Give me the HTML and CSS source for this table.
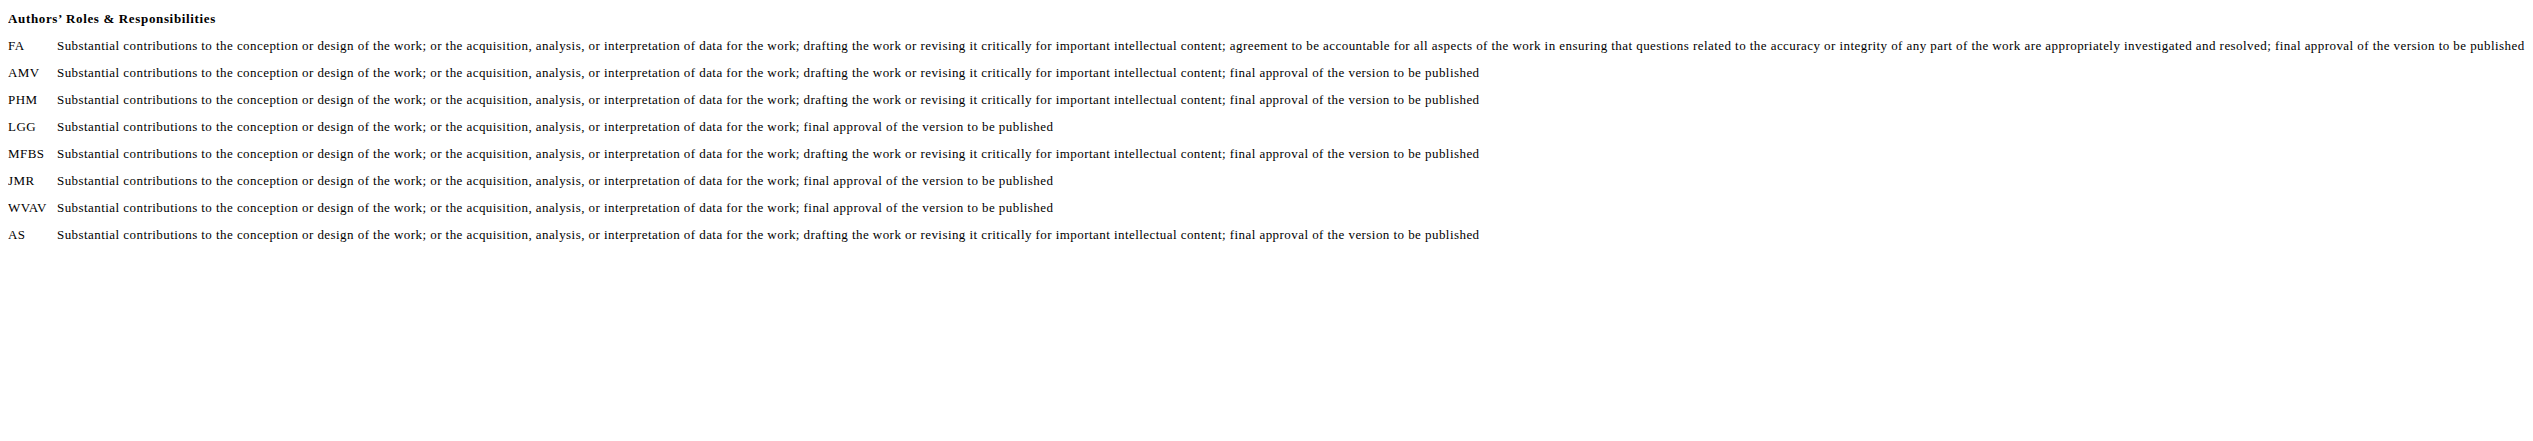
FILE: index.html
```html
<!DOCTYPE html>
<html>
<head>
<meta charset="utf-8">
<link rel="stylesheet" href="styles.css">
</head>
<body>
<div class="roles">
  <div class="roles-title">Authors’ Roles &amp; Responsibilities</div>
  <div class="roles-grid">
    <div class="initials">FA</div>
    <div class="desc">Substantial contributions to the conception or design of the work; or the acquisition, analysis, or interpretation of data for the work; drafting the work or revising it critically for important intellectual content; agreement to be accountable for all aspects of the work in ensuring that questions related to the accuracy or integrity of any part of the work are appropriately investigated and resolved; final approval of the version to be published</div>
    <div class="initials">AMV</div>
    <div class="desc">Substantial contributions to the conception or design of the work; or the acquisition, analysis, or interpretation of data for the work; drafting the work or revising it critically for important intellectual content; final approval of the version to be published</div>
    <div class="initials">PHM</div>
    <div class="desc">Substantial contributions to the conception or design of the work; or the acquisition, analysis, or interpretation of data for the work; drafting the work or revising it critically for important intellectual content; final approval of the version to be published</div>
    <div class="initials">LGG</div>
    <div class="desc">Substantial contributions to the conception or design of the work; or the acquisition, analysis, or interpretation of data for the work; final approval of the version to be published</div>
    <div class="initials">MFBS</div>
    <div class="desc">Substantial contributions to the conception or design of the work; or the acquisition, analysis, or interpretation of data for the work; drafting the work or revising it critically for important intellectual content; final approval of the version to be published</div>
    <div class="initials">JMR</div>
    <div class="desc">Substantial contributions to the conception or design of the work; or the acquisition, analysis, or interpretation of data for the work; final approval of the version to be published</div>
    <div class="initials">WVAV</div>
    <div class="desc">Substantial contributions to the conception or design of the work; or the acquisition, analysis, or interpretation of data for the work; final approval of the version to be published</div>
    <div class="initials">AS</div>
    <div class="desc">Substantial contributions to the conception or design of the work; or the acquisition, analysis, or interpretation of data for the work; drafting the work or revising it critically for important intellectual content; final approval of the version to be published</div>
  </div>
</div>
</body>
</html>
```
FILE: styles.css
```css
html, body {
  background: #ffffff;
}
body {
  margin: 8px;
  font-family: "Liberation Serif", "Times New Roman", serif;
  font-size: 13px;
  color: #000000;
}
.roles-title {
  font-weight: bold;
  line-height: 18px;
  margin-top: 2px;
  letter-spacing: 0.65px;
}
.roles-grid {
  display: grid;
  grid-template-columns: 41px auto;
  column-gap: 8px;
  row-gap: 12px;
  margin-top: 10px;
  line-height: 15px;
  letter-spacing: 0.44px;
}
.initials, .desc {
  white-space: nowrap;
}
```
